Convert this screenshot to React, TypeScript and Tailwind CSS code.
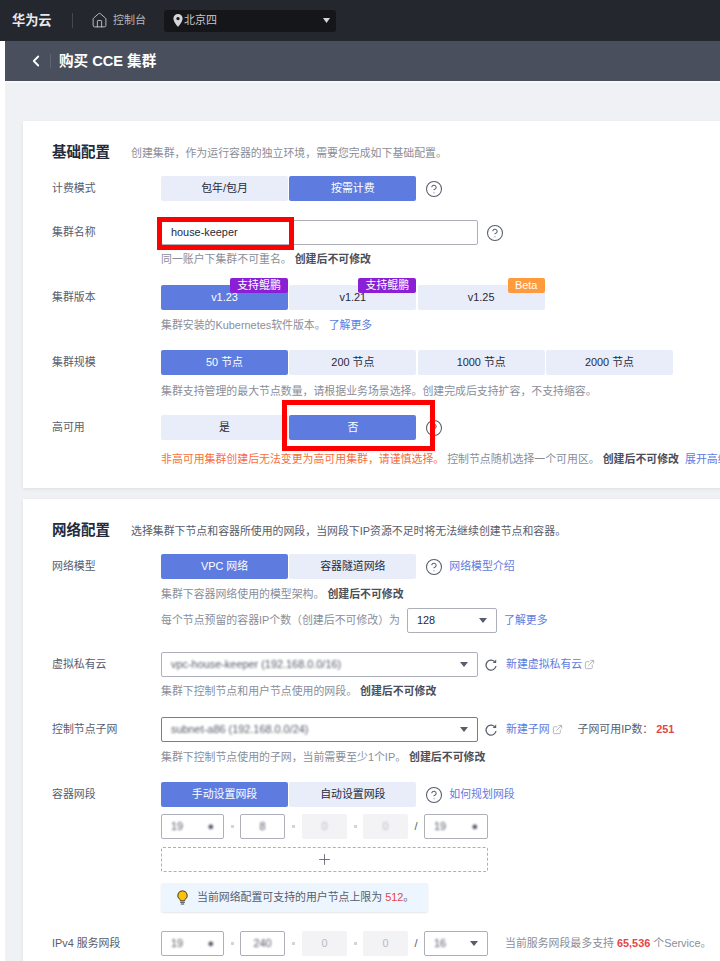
import React from "react";
import { Home, CircleHelp, ExternalLink, ChevronLeft, Plus } from "lucide-react";

const font = { fontFamily: '"Liberation Sans","Noto Sans CJK SC",sans-serif' };

function Seg({ label, on }: { label: string; on?: boolean }) {
  return (
    <div className={`w-[127px] h-[25px] shrink-0 flex items-center justify-center rounded-[2px] text-[10.9px] ${on ? "bg-[#5e7ce0] text-white" : "bg-[#e9edfa] text-[#252b3a]"}`}>
      {label}
    </div>
  );
}

function Badge({ label, cls }: { label: string; cls: string }) {
  return <span className={`absolute right-0 top-[-7px] h-[15px] flex items-center justify-center rounded-[2px] text-white text-[10.9px] ${cls}`}>{label}</span>;
}

function Help({ className = "" }: { className?: string }) {
  return <CircleHelp size={18} strokeWidth={1.4} className={`text-[#575d6c] shrink-0 ${className}`} />;
}

function Caret() {
  return (
    <svg width="8" height="5" viewBox="0 0 8 5" className="shrink-0">
      <path d="M0 0h8L4 5z" fill="#575d6c" />
    </svg>
  );
}

function Refresh() {
  return (
    <svg width="12" height="12" viewBox="0 0 12 12" fill="none" className="ml-[7px] shrink-0">
      <path d="M9.600 2.600A5 5 0 1 0 11 7" stroke="#575d6c" strokeWidth="1.300" />
      <path d="M11.200 0.600v3.500H7.700z" fill="#575d6c" />
    </svg>
  );
}

function Row({ label, mt, children }: { label?: string; mt: string; children: React.ReactNode }) {
  return (
    <div className={`flex items-center h-[25px] ${mt}`}>
      <div className="w-[109px] shrink-0 text-[10.9px] text-[#575d6c]">{label}</div>
      <div className="flex items-center min-w-0">{children}</div>
    </div>
  );
}

function Hint({ mt, children }: { mt: string; children: React.ReactNode }) {
  return <div className={`pl-[109px] h-[14px] leading-[14px] text-[10.9px] text-[#8a8e99] whitespace-nowrap ${mt}`}>{children}</div>;
}

const B = ({ children }: { children: React.ReactNode }) => <span className="font-bold text-[#4b4f5a]">{children}</span>;
const A = ({ children, cls = "" }: { children: React.ReactNode; cls?: string }) => <span className={`text-[#5e7ce0] text-[10.9px] ${cls}`}>{children}</span>;

function Blur({ children, cls = "" }: { children: React.ReactNode; cls?: string }) {
  return <span className={`blur-[1.2px] text-[#555a68] ${cls}`}>{children}</span>;
}

function Box({ w, off, children, center }: { w: string; off?: boolean; children?: React.ReactNode; center?: boolean }) {
  return (
    <div className={`${w} h-[25px] shrink-0 rounded-[2px] flex items-center px-[9px] text-[10.9px] ${center ? "justify-center" : "justify-between"} ${off ? "bg-[#f3f3f5]" : "bg-white border border-[#adb0b8]"}`}>
      {children}
    </div>
  );
}

function Dot({ w }: { w: string }) {
  return <div className={`${w} shrink-0 flex justify-center`}><span className="block w-[3px] h-[3px] bg-[#d4d5da]" /></div>;
}

function Select({ w, blue, children }: { w: string; blue?: boolean; children: React.ReactNode }) {
  return (
    <div className={`${w} h-[25px] shrink-0 bg-white rounded-[2px] border flex items-center justify-between px-[9px] text-[10.9px] text-[#252b3a] ${blue ? "border-[#5e7ce0]" : "border-[#adb0b8]"}`}>
      {children}
      <Caret />
    </div>
  );
}

function Cidr({ second, third, last }: { second: React.ReactNode; third: React.ReactNode; last: React.ReactNode }) {
  return (
    <>
      <Box w="w-[63px]"><Blur cls="text-[#8a8e99]">19</Blur><Blur cls="font-bold">●</Blur></Box>
      <Dot w="w-[16px]" />
      <Box w="w-[45px]" center>{second}</Box>
      <Dot w="w-[17px]" />
      <Box w="w-[45px]" off center>{third}</Box>
      <Dot w="w-[16px]" />
      <Box w="w-[45px]" off center>{third}</Box>
      <div className="w-[16px] shrink-0 text-center text-[11px] text-[#575d6c]">/</div>
      {last}
    </>
  );
}

export default function App() {
  return (
    <div style={font} className="w-[720px] h-[961px] overflow-hidden bg-white relative">
      <header className="h-[41px] bg-[#24272e] flex items-center">
        <span className="ml-[12px] w-[40px] text-[13.2px] font-bold text-[#e8e9ec] whitespace-nowrap">华为云</span>
        <span className="ml-[20px] w-px h-[15px] bg-[#444851]" />
        <Home size={17} strokeWidth={1.3} className="ml-[18px] text-[#c4c6cc]" />
        <span className="ml-[5px] w-[34px] text-[11px] text-[#b4b6bd] whitespace-nowrap">控制台</span>
        <div className="ml-[17px] w-[172px] h-[22px] bg-[#14161a] rounded-[3px] flex items-center pl-[5px] pr-[6px]">
          <svg width="10" height="13" viewBox="0 0 10 13" className="ml-[4px]">
            <path fillRule="evenodd" d="M5 0a4.600 4.600 0 0 0-4.600 4.600C.4 8 5 13 5 13s4.600-5 4.600-8.400A4.600 4.600 0 0 0 5 0zm0 6.300a1.700 1.700 0 1 1 0-3.400 1.700 1.700 0 0 1 0 3.400z" fill="#d4d6da" />
          </svg>
          <span className="ml-[1px] text-[11px] text-[#c4c6cc] whitespace-nowrap">北京四</span>
          <svg width="7" height="5" viewBox="0 0 7 5" className="ml-auto"><path d="M0 0h7L3.500 5z" fill="#d4d6da" /></svg>
        </div>
      </header>

      <div className="ml-[5px] h-[40px] bg-[#4a4f5e] flex items-center">
        <ChevronLeft size={18} strokeWidth={2.4} className="ml-[22px] text-white" />
        <span className="ml-[5px] w-px h-[14px] bg-[#5f6472]" />
        <span className="ml-[8px] pt-[2px] text-[14.6px] font-bold text-white whitespace-nowrap">购买 CCE 集群</span>
      </div>

      <main className="ml-[5px] h-[880px] bg-[#f0f1f5] pl-[18px] pt-[40px] border-t-2 border-[#f7f7fa]">
        <section className="w-[720px] h-[367px] -mt-[2px] bg-white pl-[29px] pt-[24px] shadow-[0_1px_3px_rgba(0,0,0,0.08)]">
          <div className="flex items-center h-[16px]">
            <h2 className="w-[79px] text-[14.5px] font-bold text-[#252b3a] whitespace-nowrap">基础配置</h2>
            <span className="text-[10.9px] text-[#8a8e99] whitespace-nowrap">创建集群，作为运行容器的独立环境，需要您完成如下基础配置。</span>
          </div>
          <Row label="计费模式" mt="mt-[15px]">
            <div className="flex gap-[1.33px]"><Seg label="包年/包月" /><Seg label="按需计费" on /></div>
            <Help className="ml-[9px]" />
          </Row>
          <Row label="集群名称" mt="mt-[19px]">
            <div className="w-[317px] h-[25px] rounded-[2px] bg-white border border-[#adb0b8] flex items-center pl-[9px] text-[10.9px] text-[#252b3a]">house-keeper</div>
            <Help className="ml-[8px]" />
          </Row>
          <Hint mt="mt-[7px]">同一账户下集群不可重名。 <B>创建后不可修改</B></Hint>
          <Row label="集群版本" mt="mt-[19px]">
            <div className="flex gap-[1.33px]">
              <div className="relative"><Seg label="v1.23" on /><Badge label="支持鲲鹏" cls="w-[58px] bg-[#8a1fd6]" /></div>
              <div className="relative"><Seg label="v1.21" /><Badge label="支持鲲鹏" cls="w-[58px] bg-[#8a1fd6]" /></div>
              <div className="relative"><Seg label="v1.25" /><Badge label="Beta" cls="w-[37px] bg-[#ff9a3d]" /></div>
            </div>
          </Row>
          <Hint mt="mt-[8px]">集群安装的Kubernetes软件版本。 <A>了解更多</A></Hint>
          <Row label="集群规模" mt="mt-[18px]">
            <div className="flex gap-[1.33px]">
              <Seg label="50 节点" on /><Seg label="200 节点" /><Seg label="1000 节点" /><Seg label="2000 节点" />
            </div>
          </Row>
          <Hint mt="mt-[9px]">集群支持管理的最大节点数量，请根据业务场景选择。创建完成后支持扩容，不支持缩容。</Hint>
          <Row label="高可用" mt="mt-[17px]">
            <div className="flex gap-[1.33px]"><Seg label="是" /><Seg label="否" on /></div>
            <Help className="ml-[9px]" />
          </Row>
          <Hint mt="mt-[12px]"><span className="text-[#f66f3c]">非高可用集群创建后无法变更为高可用集群，请谨慎选择。</span> 控制节点随机选择一个可用区。 <B>创建后不可修改</B>&nbsp; <A>展开高级配置</A></Hint>
        </section>

        <section className="w-[720px] h-[470px] mt-[11px] bg-white pl-[29px] pt-[24px] shadow-[0_1px_3px_rgba(0,0,0,0.08)]">
          <div className="flex items-center h-[16px]">
            <h2 className="w-[79px] text-[14.5px] font-bold text-[#252b3a] whitespace-nowrap">网络配置</h2>
            <span className="text-[10.9px] text-[#575d6c] whitespace-nowrap">选择集群下节点和容器所使用的网段，当网段下IP资源不足时将无法继续创建节点和容器。</span>
          </div>
          <Row label="网络模型" mt="mt-[15px]">
            <div className="flex gap-[1.33px]"><Seg label="VPC 网络" on /><Seg label="容器隧道网络" /></div>
            <Help className="ml-[9px]" />
            <A cls="ml-[6px] whitespace-nowrap">网络模型介绍</A>
          </Row>
          <Hint mt="mt-[8px]">集群下容器网络使用的模型架构。 <B>创建后不可修改</B></Hint>
          <div className="flex items-center h-[25px] mt-[7px] pl-[109px]">
            <span className="w-[246px] shrink-0 text-[10.9px] text-[#8a8e99] whitespace-nowrap">每个节点预留的容器IP个数（创建后不可修改）为</span>
            <Select w="w-[90px]">128</Select>
            <A cls="ml-[7px] whitespace-nowrap">了解更多</A>
          </div>
          <Row label="虚拟私有云" mt="mt-[19px]">
            <Select w="w-[317px]"><Blur cls="whitespace-nowrap">vpc-house-keeper (192.168.0.0/16)</Blur></Select>
            <Refresh />
            <A cls="ml-[9px] whitespace-nowrap">新建虚拟私有云</A>
            <ExternalLink size={11} className="ml-[2px] text-[#adb0b8] shrink-0" />
          </Row>
          <Hint mt="mt-[7px]">集群下控制节点和用户节点使用的网段。 <B>创建后不可修改</B></Hint>
          <Row label="控制节点子网" mt="mt-[19px]">
            <Select w="w-[317px]" blue><Blur cls="whitespace-nowrap">subnet-a86 (192.168.0.0/24)</Blur></Select>
            <Refresh />
            <A cls="ml-[9px] whitespace-nowrap">新建子网</A>
            <ExternalLink size={11} className="ml-[2px] text-[#adb0b8] shrink-0" />
            <span className="ml-[15px] text-[10.9px] text-[#575d6c] whitespace-nowrap">子网可用IP数： <b className="text-[#e54545]">251</b></span>
          </Row>
          <Hint mt="mt-[8px]">集群下控制节点使用的子网，当前需要至少1个IP。 <B>创建后不可修改</B></Hint>
          <Row label="容器网段" mt="mt-[18px]">
            <div className="flex gap-[1.33px]"><Seg label="手动设置网段" on /><Seg label="自动设置网段" /></div>
            <Help className="ml-[9px]" />
            <A cls="ml-[6px] whitespace-nowrap">如何规划网段</A>
          </Row>
          <div className="flex items-center h-[25px] mt-[7px] pl-[109px]">
            <Cidr
              second={<Blur cls="text-[#8a8e99]">8</Blur>}
              third={<Blur cls="text-[#b8bac2]">0</Blur>}
              last={<Box w="w-[64px]"><Blur cls="text-[#8a8e99]">19</Blur><Blur cls="font-bold">●</Blur></Box>}
            />
          </div>
          <div className="ml-[109px] w-[327px] h-[25px] mt-[8px] rounded-[2px] border border-dashed border-[#adb0b8] flex items-center justify-center">
            <Plus size={17} strokeWidth={1.2} className="text-[#575d6c]" />
          </div>
          <div className="ml-[109px] w-[267px] h-[29px] mt-[11px] rounded-[2px] bg-[#edf5fe] shadow-[0_1px_2px_rgba(0,0,0,0.1)] flex items-center pl-[16px] text-[10.9px] text-[#575d6c] whitespace-nowrap">
            <svg width="11" height="15" viewBox="0 0 11 15" className="mr-[9px] shrink-0">
              <path d="M5.500.8a4.700 4.700 0 0 0-2.800 8.500c.5.4.7.9.7 1.500h4.200c0-.6.2-1.100.7-1.500A4.700 4.700 0 0 0 5.500.8z" fill="#fac20a" stroke="#3d3d3d" strokeWidth="1" />
              <path d="M3.600 12.300h3.800M4.300 14h2.400" stroke="#3d3d3d" strokeWidth="1.100" strokeLinecap="round" />
            </svg>
            当前网络配置可支持的用户节点上限为&nbsp;<span className="text-[#e54545]">512</span>。
          </div>
          <Row label="IPv4 服务网段" mt="mt-[19px]">
            <Cidr
              second={<Blur>240</Blur>}
              third={<span className="text-[#b8bac2]">0</span>}
              last={<Select w="w-[64px]"><Blur>16</Blur></Select>}
            />
            <span className="ml-[17px] text-[10.9px] text-[#8a8e99] whitespace-nowrap">当前服务网段最多支持 <b className="text-[#e54545]">65,536</b> 个Service。</span>
          </Row>
        </section>
      </main>

      <div className="absolute left-[157px] top-[217px] w-[137px] h-[33px] border-[5px] border-[#fe0000]" />
      <div className="absolute left-[282px] top-[400px] w-[153px] h-[51px] border-[5px] border-[#fe0000]" />
    </div>
  );
}
